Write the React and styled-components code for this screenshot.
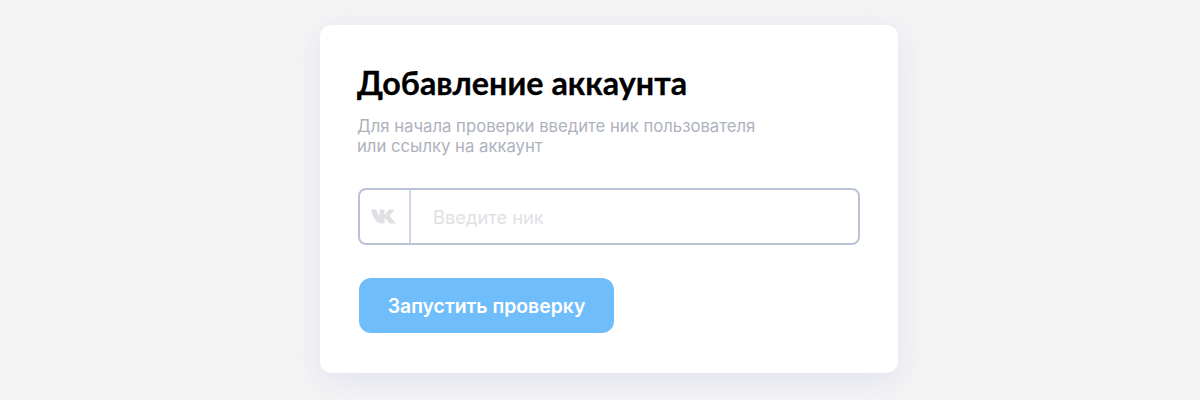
import React from "react";
import styled, { createGlobalStyle } from "styled-components";

const Global = createGlobalStyle`
  html, body { margin: 0; padding: 0; background: #f4f4f5; }
  body { font-family: "Inter", "Liberation Sans", sans-serif; }
`;

const Page = styled.main`
  width: 1200px;
  height: 400px;
  overflow: hidden;
  display: flex;
  justify-content: center;
  align-items: flex-start;
  padding: 25px 0 0 18px;
  box-sizing: border-box;
`;

const Card = styled.section`
  width: 578px;
  height: 348px;
  box-sizing: border-box;
  background: #fff;
  border-radius: 12px;
  box-shadow: 0 8px 28px rgba(205, 205, 235, 0.45);
  padding: 39px 38px 0 37px;
  display: flex;
  flex-direction: column;
  align-items: flex-start;
`;

const Title = styled.h1`
  margin: 0;
  font-family: "Lato", "Liberation Sans", sans-serif;
  font-weight: 700;
  font-size: 32.3px;
  line-height: 38px;
  color: #000;
  -webkit-text-stroke: 0.3px #000;
`;

const Subtitle = styled.p`
  margin: 14px 0 0;
  font-size: 16.7px;
  line-height: 20px;
  color: #adb2be;
`;

const Field = styled.div`
  margin: 32px 0 0 1px;
  width: 502px;
  height: 57px;
  box-sizing: border-box;
  border: 2px solid #bac3d6;
  border-radius: 8px;
  display: flex;
  align-items: stretch;
`;

const IconCell = styled.div`
  width: 51px;
  box-sizing: border-box;
  border-right: 2px solid #ccd6e6;
  display: flex;
  align-items: center;
  justify-content: center;
  padding-right: 2px;
`;

const VkIcon = styled.svg`
  width: 25px;
  height: 15px;
  fill: #dfe0e4;
  display: block;
`;

const Input = styled.input`
  flex: 1;
  min-width: 0;
  border: 0;
  outline: 0;
  background: transparent;
  padding: 0 0 0 22px;
  font-family: inherit;
  font-size: 18.3px;
  color: #333;
  &::placeholder { color: #e0e1e5; opacity: 1; }
`;

const Button = styled.button`
  margin: 33px 0 0 2px;
  width: 255px;
  height: 55px;
  border: 0;
  border-radius: 12px;
  background: #70bdfb;
  color: #fff;
  font-family: inherit;
  font-weight: 600;
  font-size: 19.4px;
  padding: 0;
`;

export default function App() {
  return (
    <Page>
      <Global />
      <Card>
        <Title>Добавление аккаунта</Title>
        <Subtitle>
          Для начала проверки введите ник пользователя
          <br />
          или ссылку на аккаунт
        </Subtitle>
        <Field>
          <IconCell>
            <VkIcon viewBox="0 0 25 15">
              <path d="M0 0.5H5.2L8.6 8V0.5H13.6V6.2L17.8 0.5H23.8L18.6 7L25 14.5H18.8L13.6 8.4V14.5H10.8C5.5 14.5 1.6 8.5 0 0.5Z" />
            </VkIcon>
          </IconCell>
          <Input placeholder="Введите ник" />
        </Field>
        <Button>Запустить проверку</Button>
      </Card>
    </Page>
  );
}
